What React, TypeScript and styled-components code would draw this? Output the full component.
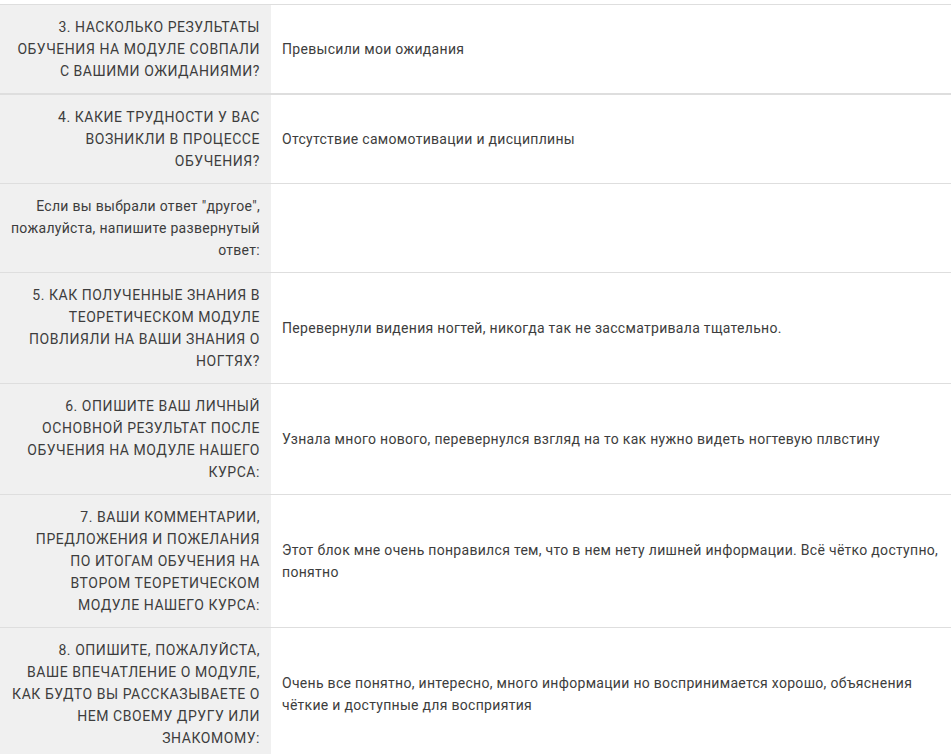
import React from "react";
import styled, { createGlobalStyle } from "styled-components";

const Global = createGlobalStyle`
  html, body { margin: 0; padding: 0; background: #ffffff; overflow: hidden; }
  body { font-family: Roboto, "Liberation Sans", sans-serif; }
`;

const Page = styled.div`
  padding-top: 4px;
  width: 962px;
`;

const Table = styled.table`
  width: 100%;
  border-collapse: collapse;
  table-layout: fixed;
  font-size: 14px;
  line-height: 22px;
  color: #3d3d3d;
  letter-spacing: 0.3px;
`;

const Row = styled.tr<{ $thick?: boolean }>`
  border-top: 1px solid #dedede;
  border-bottom: ${(p) => (p.$thick ? "2px" : "1px")} solid #dedede;
`;

const Question = styled.th<{ $caps?: boolean }>`
  width: 271px;
  box-sizing: border-box;
  background: #f0f0f0;
  text-align: right;
  vertical-align: middle;
  font-weight: 400;
  padding: 11px 11px 11px 4px;
  white-space: nowrap;
  text-transform: ${(p) => (p.$caps ? "uppercase" : "none")};
  letter-spacing: ${(p) => (p.$caps ? "0.55px" : "0.3px")};
`;

const Answer = styled.td`
  vertical-align: middle;
  padding: 11px 11px;
`;

const Line = styled.span`
  display: block;
`;

type Item = { q: string[]; a: string[]; caps: boolean; thick?: boolean };

const items: Item[] = [
  {
    q: ["3. Насколько результаты", "обучения на модуле совпали", "с вашими ожиданиями?"],
    a: ["Превысили мои ожидания"],
    caps: true,
    thick: true,
  },
  {
    q: ["4. Какие трудности у вас", "возникли в процессе", "обучения?"],
    a: ["Отсутствие самомотивации и дисциплины"],
    caps: true,
  },
  {
    q: ['Если вы выбрали ответ "другое",', "пожалуйста, напишите развернутый", "ответ:"],
    a: [],
    caps: false,
  },
  {
    q: ["5. Как полученные знания в", "теоретическом модуле", "повлияли на ваши знания о", "ногтях?"],
    a: ["Перевернули видения ногтей, никогда так не зассматривала тщательно."],
    caps: true,
  },
  {
    q: ["6. Опишите ваш личный", "основной результат после", "обучения на модуле нашего", "курса:"],
    a: ["Узнала много нового, перевернулся взгляд на то как нужно видеть ногтевую плвстину"],
    caps: true,
  },
  {
    q: [
      "7. Ваши комментарии,",
      "предложения и пожелания",
      "по итогам обучения на",
      "втором теоретическом",
      "модуле нашего курса:",
    ],
    a: ["Этот блок мне очень понравился тем, что в нем нету лишней информации. Всё чётко доступно,", "понятно"],
    caps: true,
  },
  {
    q: [
      "8. Опишите, пожалуйста,",
      "ваше впечатление о модуле,",
      "как будто вы рассказываете о",
      "нем своему другу или",
      "знакомому:",
    ],
    a: ["Очень все понятно, интересно, много информации но воспринимается хорошо, объяснения", "чёткие и доступные для восприятия"],
    caps: true,
  },
];

export default function App() {
  return (
    <>
      <Global />
      <Page>
        <Table>
          <tbody>
            {items.map((it, i) => (
              <Row key={i} $thick={it.thick}>
                <Question $caps={it.caps}>
                  {it.q.map((l, j) => (
                    <Line key={j}>{l}</Line>
                  ))}
                </Question>
                <Answer>
                  {it.a.map((l, j) => (
                    <Line key={j}>{l}</Line>
                  ))}
                </Answer>
              </Row>
            ))}
          </tbody>
        </Table>
      </Page>
    </>
  );
}
